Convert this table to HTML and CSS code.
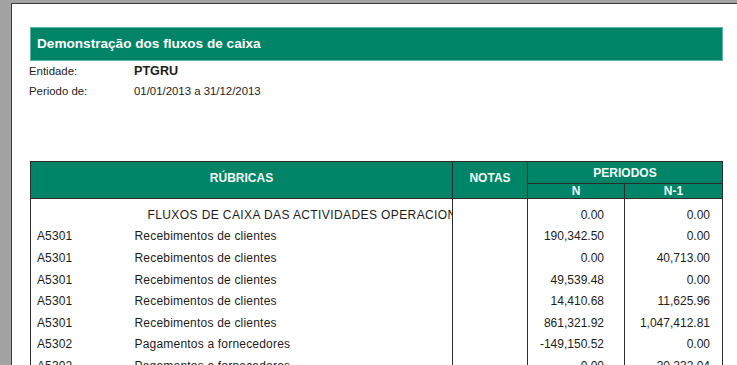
FILE: index.html
```html
<!DOCTYPE html>
<html lang="pt">
<head>
<meta charset="utf-8">
<title>Demonstração dos fluxos de caixa</title>
<link rel="stylesheet" href="styles.css">
</head>
<body>
<div class="page">
  <div class="title-bar">Demonstração dos fluxos de caixa</div>
  <div class="meta">
    <div class="meta-row"><span class="meta-label">Entidade:</span><span class="meta-value strong">PTGRU</span></div>
    <div class="meta-row"><span class="meta-label">Periodo de:</span><span class="meta-value">01/01/2013 a 31/12/2013</span></div>
  </div>
  <table class="report">
    <colgroup>
      <col class="c-code"><col class="c-desc"><col class="c-notes"><col class="c-n"><col class="c-n1">
    </colgroup>
    <thead>
      <tr class="h1">
        <th colspan="2" rowspan="2" class="h-rub">RÚBRICAS</th>
        <th rowspan="2" class="h-notes">NOTAS</th>
        <th colspan="2" class="h-per">PERIODOS</th>
      </tr>
      <tr class="h2">
        <th>N</th>
        <th>N-1</th>
      </tr>
    </thead>
    <tbody>
      <tr class="first">
        <td class="code"></td>
        <td class="desc section"><div class="clip">FLUXOS DE CAIXA DAS ACTIVIDADES OPERACIONAIS</div></td>
        <td class="notes"></td>
        <td class="num">0.00</td>
        <td class="num n1">0.00</td>
      </tr>
      <tr><td class="code">A5301</td><td class="desc">Recebimentos de clientes</td><td class="notes"></td><td class="num">190,342.50</td><td class="num n1">0.00</td></tr>
      <tr><td class="code">A5301</td><td class="desc">Recebimentos de clientes</td><td class="notes"></td><td class="num">0.00</td><td class="num n1">40,713.00</td></tr>
      <tr><td class="code">A5301</td><td class="desc">Recebimentos de clientes</td><td class="notes"></td><td class="num">49,539.48</td><td class="num n1">0.00</td></tr>
      <tr><td class="code">A5301</td><td class="desc">Recebimentos de clientes</td><td class="notes"></td><td class="num">14,410.68</td><td class="num n1">11,625.96</td></tr>
      <tr><td class="code">A5301</td><td class="desc">Recebimentos de clientes</td><td class="notes"></td><td class="num">861,321.92</td><td class="num n1">1,047,412.81</td></tr>
      <tr><td class="code">A5302</td><td class="desc">Pagamentos a fornecedores</td><td class="notes"></td><td class="num">-149,150.52</td><td class="num n1">0.00</td></tr>
      <tr><td class="code">A5302</td><td class="desc">Pagamentos a fornecedores</td><td class="notes"></td><td class="num">0.00</td><td class="num n1">30,232.04</td></tr>
    </tbody>
  </table>
</div>
</body>
</html>
```

FILE: styles.css
```css
html, body {
  margin: 0;
  padding: 0;
  height: 100%;
  overflow: hidden;
}
body {
  background: #a3a3a3;
  font-family: "Liberation Sans", Arial, sans-serif;
  font-size: 12px;
  color: #1c1c1c;
}
.page {
  margin: 3px 0 0 11px;
  min-height: 400px;
  background: #ffffff;
  border-left: 1px solid #3a3a3a;
  border-top: 1px solid #3a3a3a;
  padding: 23px 0 0 18px;
}
.title-bar {
  width: 685px;
  height: 32px;
  background: #008468;
  border: 1px solid #5fb59f;
  color: #ffffff;
  font-weight: bold;
  font-size: 13.6px;
  line-height: 32px;
  padding-left: 6px;
}
.meta-row {
  display: flex;
  height: 20px;
  line-height: 20px;
  font-size: 11.4px;
}
.meta-label {
  width: 104px;
  margin-left: -1px;
  margin-right: 1px;
}
.meta-value.strong {
  font-weight: bold;
  font-size: 12.6px;
}
.report {
  margin-top: 60px;
  border-collapse: collapse;
  table-layout: fixed;
  width: 693px;
}
.c-code { width: 100px; }
.c-desc { width: 322px; }
.c-notes { width: 75px; }
.c-n { width: 97px; }
.c-n1 { width: 98px; }
.report th {
  background: #008468;
  color: #f4fbf6;
  font-weight: bold;
  border: 1px solid #2b2b2b;
  padding: 0;
  text-align: center;
}
.h1 th { height: 21px; }
.h2 th { height: 14px; line-height: 14px; }
.h-rub, .h-notes { padding-bottom: 5px !important; }
.h-per { vertical-align: middle; line-height: 14px; }
.report td {
  border-left: 1px solid #2b2b2b;
  border-right: 1px solid #2b2b2b;
  padding: 0;
  height: 21.6px;
  white-space: nowrap;
  overflow: hidden;
}
.report td.code { border-right: none; padding-left: 6px; letter-spacing: 0.1px; }
.report td.desc { border-left: none; padding-left: 4px; letter-spacing: 0.2px; }
.report td.desc.section { padding-left: 17px; letter-spacing: 0.4px; }
.clip { overflow: hidden; white-space: nowrap; }
.report td.num { text-align: right; padding-right: 20px; }
.report td.num.n1 { padding-right: 12px; }
.report tr.first td { padding-top: 5px; }
```
